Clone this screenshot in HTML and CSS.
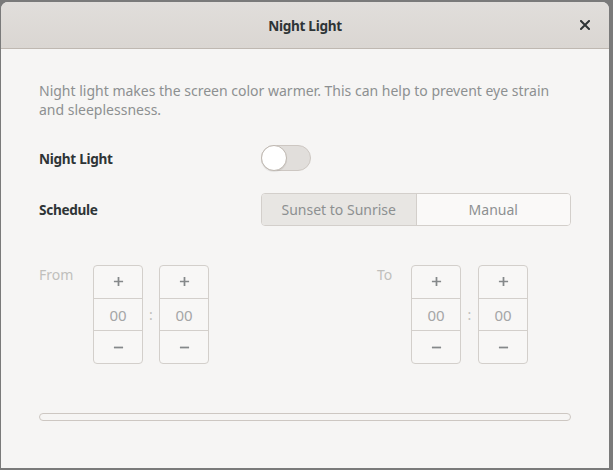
FILE: index.html
```html
<!DOCTYPE html>
<html>
<head>
<meta charset="utf-8">
<link rel="stylesheet" href="styles.css">
</head>
<body>
<div class="window">
  <header class="titlebar">
    <span class="title">Night Light</span>
    <span class="close" aria-label="Close">
      <svg width="10" height="10" viewBox="0 0 10 10"><path d="M1 1 L9 9 M9 1 L1 9" stroke="#2e3436" stroke-width="2" stroke-linecap="square"/></svg>
    </span>
  </header>
  <main class="content">
    <p class="desc">Night light makes the screen color warmer. This can help to prevent eye strain and sleeplessness.</p>
    <div class="row row-switch">
      <span class="label">Night Light</span>
      <span class="switch"><span class="knob"></span></span>
    </div>
    <div class="row row-schedule">
      <span class="label">Schedule</span>
      <div class="linked">
        <span class="seg active">Sunset to Sunrise</span>
        <span class="seg">Manual</span>
      </div>
    </div>
    <div class="times">
      <div class="group from">
        <span class="tlabel">From</span>
        <div class="spin">
          <span class="cell"><svg class="ico" viewBox="0 0 12 12"><path d="M6 1 V11 M1 6 H11"/></svg></span>
          <span class="cell val">00</span>
          <span class="cell"><svg class="ico" viewBox="0 0 12 12"><path d="M1 6 H11"/></svg></span>
        </div>
        <span class="colon">:</span>
        <div class="spin">
          <span class="cell"><svg class="ico" viewBox="0 0 12 12"><path d="M6 1 V11 M1 6 H11"/></svg></span>
          <span class="cell val">00</span>
          <span class="cell"><svg class="ico" viewBox="0 0 12 12"><path d="M1 6 H11"/></svg></span>
        </div>
      </div>
      <div class="group to">
        <span class="tlabel">To</span>
        <div class="spin">
          <span class="cell"><svg class="ico" viewBox="0 0 12 12"><path d="M6 1 V11 M1 6 H11"/></svg></span>
          <span class="cell val">00</span>
          <span class="cell"><svg class="ico" viewBox="0 0 12 12"><path d="M1 6 H11"/></svg></span>
        </div>
        <span class="colon">:</span>
        <div class="spin">
          <span class="cell"><svg class="ico" viewBox="0 0 12 12"><path d="M6 1 V11 M1 6 H11"/></svg></span>
          <span class="cell val">00</span>
          <span class="cell"><svg class="ico" viewBox="0 0 12 12"><path d="M1 6 H11"/></svg></span>
        </div>
      </div>
    </div>
    <div class="levelbar"></div>
  </main>
</div>
</body>
</html>
```
FILE: styles.css
```css
html, body {
  margin: 0;
  padding: 0;
}
body {
  background: #7a7a7a;
  width: 613px;
  height: 470px;
  overflow: hidden;
  font-family: "Noto Sans", "DejaVu Sans", sans-serif;
}
.window {
  margin: 2px 0 0 1px;
  width: 608px;
  height: 466px;
  border-radius: 7px 7px 0 0;
  overflow: hidden;
  background: #f6f5f4;
  display: flex;
  flex-direction: column;
}
.titlebar {
  height: 46px;
  flex: none;
  background: linear-gradient(#e1dedb, #dad6d2);
  border-bottom: 1px solid #bfb8b1;
  position: relative;
  display: flex;
  align-items: center;
  justify-content: center;
}
.title {
  font-size: 13.6px;
  font-weight: 700;
  letter-spacing: -0.3px;
  color: #2e3436;
}
.close {
  position: absolute;
  right: 19px;
  top: 18px;
  width: 10px;
  height: 10px;
  display: flex;
}
.content {
  flex: 1;
  padding: 32px 38px 0 38px;
  display: flex;
  flex-direction: column;
}
.desc {
  margin: 0;
  font-size: 14px;
  line-height: 19px;
  color: #8d9091;
}
.row {
  display: flex;
  align-items: center;
}
.label {
  width: 222px;
  font-size: 13.6px;
  font-weight: 700;
  letter-spacing: -0.3px;
  color: #2e3436;
}
.row-switch {
  margin-top: 26px;
  height: 26px;
}
.switch {
  width: 48px;
  height: 24px;
  border: 1px solid #cdc7c2;
  border-radius: 14px;
  background: #e1dedb;
  position: relative;
}
.knob {
  position: absolute;
  left: -1px;
  top: -1px;
  width: 24px;
  height: 24px;
  border-radius: 50%;
  background: #ffffff;
  border: 1px solid #bfb8b1;
  box-shadow: 0 1px 1px rgba(0,0,0,0.08);
}
.row-schedule {
  margin-top: 22px;
  height: 33px;
}
.linked {
  display: flex;
  width: 310px;
  height: 33px;
  box-sizing: border-box;
  border: 1px solid #d3cfcb;
  border-radius: 4px;
  overflow: hidden;
}
.seg {
  flex: 1;
  display: flex;
  align-items: center;
  justify-content: center;
  font-size: 14px;
  color: #8d9091;
  background: #faf9f8;
}
.seg.active {
  background: #e8e6e3;
  border-right: 1px solid #d3cfcb;
}
.times {
  margin-top: 39px;
  display: flex;
  gap: 168px;
}
.group {
  display: flex;
  align-items: flex-start;
}
.tlabel {
  font-size: 14px;
  color: #c0bfbc;
  line-height: 19px;
}
.from .tlabel { width: 54px; }
.to .tlabel { width: 34px; }
.spin {
  width: 50px;
  height: 99px;
  box-sizing: border-box;
  border: 1px solid #d3cfcb;
  border-radius: 4px;
  display: flex;
  flex-direction: column;
  background: #f8f7f6;
}
.cell {
  flex: 1;
  display: flex;
  align-items: center;
  justify-content: center;
}
.cell + .cell {
  border-top: 1px solid #d3cfcb;
}
.ico {
  width: 11px;
  height: 11px;
  fill: none;
  stroke: #85888a;
  stroke-width: 1.9;
}
.val {
  font-size: 15px;
  color: #a5a6a6;
}
.colon {
  width: 16px;
  text-align: center;
  align-self: center;
  font-size: 14px;
  color: #c0bfbc;
}
.to .colon { width: 17px; }
.levelbar {
  margin-top: 49px;
  height: 8px;
  box-sizing: border-box;
  border: 1px solid #cdc7c2;
  border-radius: 4px;
  background: #f6f5f4;
}
```
